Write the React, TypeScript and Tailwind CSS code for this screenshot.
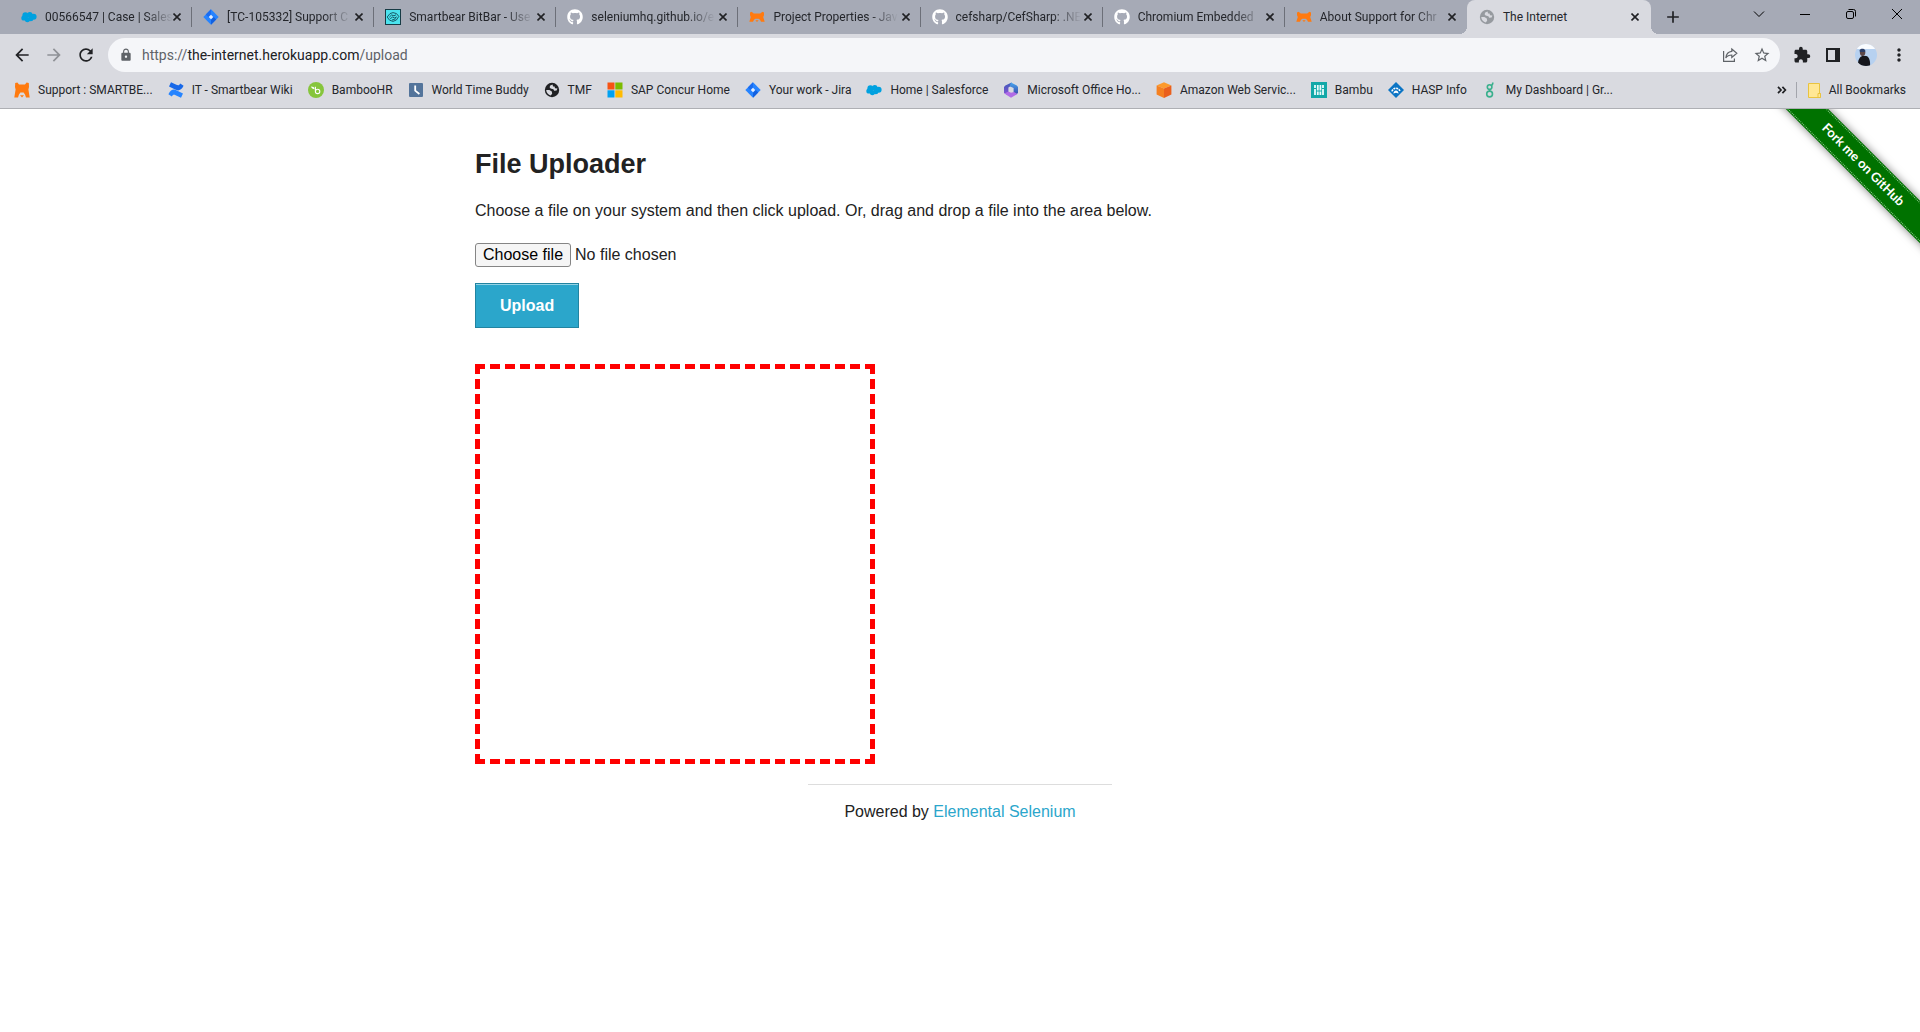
import React from "react";
import { FaGithub } from "react-icons/fa";
import {
  MdAdd,
  MdArrowBack,
  MdArrowForward,
  MdExtension,
  MdLock,
  MdMoreVert,
  MdRefresh,
  MdStarBorder,
} from "react-icons/md";

const Salesforce = () => (
  <svg viewBox="0 0 16 16" className="size-4 shrink-0">
    <g fill="#00a1e0">
      <circle cx="4.4" cy="6.2" r="3" />
      <circle cx="8.8" cy="5.8" r="2.7" />
      <circle cx="12.6" cy="7.7" r="3" />
      <circle cx="2.9" cy="9" r="2.6" />
      <circle cx="6.4" cy="10.6" r="2.6" />
      <circle cx="9.8" cy="9.8" r="2.5" />
    </g>
  </svg>
);

const Jira = () => (
  <svg viewBox="0 0 16 16" className="size-4 shrink-0">
    <path d="M8 0.3 15.7 8 8 15.7 0.3 8Z" fill="#2684ff" />
    <path d="M8 0.3V5.2L5.2 8 2.8 5.5Z" fill="#1a6cf0" />
    <path d="M8 15.7V10.8L10.8 8 13.2 10.5Z" fill="#1260e0" />
    <path d="M8 5.8 10.2 8 8 10.2 5.8 8Z" fill="#e6efff" />
  </svg>
);

const BitBar = () => (
  <svg viewBox="0 0 16 16" className="size-4 shrink-0">
    <rect x="0.5" y="0.5" width="15" height="15" fill="#4be3ee" stroke="#173b45" />
    <g fill="none" stroke="#124c59" strokeWidth="0.9">
      <path d="M2.2 8 5 4.6 8 3.6 11.5 4.6 13.8 7.4 11.4 11 8 12.4 4.6 11.2Z" />
      <path d="M4.3 8.2 6.5 6 9 6.8 11 5.8M5.2 9.8 7.5 8 9.6 9 11.8 7.8M7 11 9.2 10.4 10.8 9.6" />
    </g>
  </svg>
);

const Bear = () => (
  <svg viewBox="0 0 16 16" className="size-4 shrink-0">
    <path
      d="M1 3.4 2.6 2.8 4.8 4.4H11.2L13.4 2.8 15 3.4 15 6.2 14.2 8 15.7 12.8H12L11 10.8 9.6 9.8H6.4L5 10.8 4 12.8H0.3L1.8 8 1 6.2Z"
      fill="#ff7a0f"
    />
    <path d="M6.4 11.2H9.6L8 13Z" fill="#ff7a0f" />
  </svg>
);

const BearTall = () => (
  <svg viewBox="0 0 16 16" className="size-4 shrink-0">
    <path
      d="M1.2 1 3.4 0.4 5 2.6H11L12.6 0.4 14.8 1 15 5 14.4 7.6 15.7 15.6H12L11 12.4 9.6 10.4H6.4L5 12.4 4 15.6H0.3L1.6 7.6 1 5Z"
      fill="#ff7a0f"
    />
    <path d="M6 13.2H10L8 15.4Z" fill="#ff7a0f" />
  </svg>
);

const Confluence = () => (
  <svg viewBox="0 0 16 16" className="size-4 shrink-0">
    <path d="M0.4 12.2C3 7 6 7 8.8 8.4L15 11.4 13 15.8 7.6 13.2C5.6 12.2 4.8 12.8 3.8 14.6Z" fill="#2684ff" />
    <path d="M15.6 3.8C13 9 10 9 7.2 7.6L1 4.6 3 0.2 8.4 2.8C10.4 3.8 11.2 3.2 12.2 1.4Z" fill="#1868e8" />
  </svg>
);

const Bamboo = () => (
  <svg viewBox="0 0 16 16" className="size-4 shrink-0">
    <circle cx="8" cy="8" r="8" fill="#86c53c" />
    <path d="M3 4.6C5 4.6 6.4 5.2 6.6 7.2 4.8 7.2 3.6 6.4 3 4.6Z" fill="#fff" />
    <path d="M7.4 4.8V9.4A2.2 2.2 0 1 0 9.6 7.2C8.6 7.2 7.8 8 7.4 9" fill="none" stroke="#fff" strokeWidth="1.1" />
  </svg>
);

const Clock = () => (
  <svg viewBox="0 0 16 16" className="size-4 shrink-0">
    <rect x="1" y="1" width="14" height="14" rx="1" fill="#53749b" />
    <path d="M7.2 3.4V8.6L11.4 12" fill="none" stroke="#fff" strokeWidth="1.8" />
  </svg>
);

const Globe = () => (
  <svg viewBox="0 0 16 16" className="size-4 shrink-0">
    <circle cx="8" cy="8" r="7.2" fill="currentColor" />
    <path
      d="M8.6 2.4 6.2 3.4 5.6 5.2 6.6 6.6 9.4 7.2 10.2 8.8 12.6 8.6 13.4 6.4 11 6.2 10.6 4.4 9 4.6Z"
      fill="#d9dae0"
    />
    <path d="M2.2 8H5.4L7.8 9.4 8.2 11.4 6.8 13.6C4.2 13 2.4 10.8 2.2 8Z" fill="#d9dae0" />
  </svg>
);

const Microsoft = () => (
  <svg viewBox="0 0 16 16" className="size-4 shrink-0">
    <path d="M0.5 0.5H7.5V7.5H0.5Z" fill="#f65314" />
    <path d="M8.3 0.5H15.5V7.5H8.3Z" fill="#7cbb00" />
    <path d="M0.5 8.3H7.5V15.5H0.5Z" fill="#00a1f1" />
    <path d="M8.3 8.3H15.5V15.5H8.3Z" fill="#ffbb00" />
  </svg>
);

const Office = () => (
  <svg viewBox="0 0 16 16" className="size-4 shrink-0">
    <defs>
      <linearGradient id="officeLeft" x1="0" y1="0" x2="0" y2="1">
        <stop offset="0" stopColor="#3c5bb8" />
        <stop offset="1" stopColor="#8b52d6" />
      </linearGradient>
      <linearGradient id="officeRight" x1="0" y1="0" x2="0" y2="1">
        <stop offset="0" stopColor="#49a9f0" />
        <stop offset="1" stopColor="#3a46a8" />
      </linearGradient>
    </defs>
    <path d="M8.6 0.4 2.4 3.6 1 5V11L5.4 13.4V5.4L8.6 3.6Z" fill="url(#officeLeft)" />
    <path d="M8 0.4 13.8 3.4 15 5V11L12.4 12.8 10.6 10.4V6L6.6 4.2Z" fill="url(#officeRight)" />
    <path d="M1.4 11.4 5.4 9.6 8 10.8 11 10 14.4 12 8 15.7Z" fill="#b06be6" />
  </svg>
);

const Aws = () => (
  <svg viewBox="0 0 16 16" className="size-4 shrink-0">
    <path d="M8 0.2 15.4 3.4 8 6.4 0.6 3.4Z" fill="#fd9a2b" />
    <path d="M0.6 3.4 8 6.4V15.9L0.6 12.4Z" fill="#f58021" />
    <path d="M15.4 3.4 8 6.4V15.9L15.4 12.4Z" fill="#ea5f1d" />
  </svg>
);

const Bambu = () => (
  <svg viewBox="0 0 16 16" className="size-4 shrink-0">
    <path d="M0 0H16V16H0Z" fill="#13a8a8" />
    <path
      d="M4 3V6M4 7V13M6.8 3V8.4M6.8 9.4V13M9.4 3V8.4M9.4 9.4V13M12 3V6M12 7V13"
      stroke="#e9fbfb"
      strokeWidth="1.8"
    />
  </svg>
);

const Hasp = () => (
  <svg viewBox="0 0 16 16" className="size-4 shrink-0">
    <path d="M8 0 16 8 8 16 0 8Z" fill="#0b74c4" />
    <path d="M4 9.4A4.1 4.1 0 0 1 12 9.4" fill="none" stroke="#fff" strokeWidth="1.6" strokeDasharray="2 0.8" />
    <path d="M5.4 11.4C5.6 9.4 6.8 8.4 8 8.4S10.4 9.4 10.6 11.4L8 10.8Z" fill="#fff" />
  </svg>
);

const Greenhouse = () => (
  <svg viewBox="0 0 16 16" className="size-4 shrink-0">
    <g fill="none" stroke="#3ab08d" strokeWidth="1.6">
      <circle cx="7.6" cy="5" r="2.3" />
      <circle cx="7.6" cy="12" r="2.9" />
      <path d="M9.2 3.4C10.4 3.2 10.8 2.4 10.8 0.6M7.6 7.4V9" />
    </g>
  </svg>
);

const Github = () => <FaGithub className="size-4 shrink-0 text-white" />;
const DarkGlobe = () => (
  <span className="text-[#202124]">
    <Globe />
  </span>
);
const GreyGlobe = () => (
  <span className="text-[#969a9f]">
    <Globe />
  </span>
);

type Entry = { title: string; icon: React.FC };

const tabs: Entry[] = [
  { title: "00566547 | Case | Sales", icon: Salesforce },
  { title: "[TC-105332] Support C", icon: Jira },
  { title: "Smartbear BitBar - Use", icon: BitBar },
  { title: "seleniumhq.github.io/e", icon: Github },
  { title: "Project Properties - Jav", icon: Bear },
  { title: "cefsharp/CefSharp: .NE", icon: Github },
  { title: "Chromium Embedded", icon: Github },
  { title: "About Support for Chr", icon: Bear },
  { title: "The Internet", icon: GreyGlobe },
];

const bookmarks: Entry[] = [
  { title: "Support : SMARTBE...", icon: BearTall },
  { title: "IT - Smartbear Wiki", icon: Confluence },
  { title: "BambooHR", icon: Bamboo },
  { title: "World Time Buddy", icon: Clock },
  { title: "TMF", icon: DarkGlobe },
  { title: "SAP Concur Home", icon: Microsoft },
  { title: "Your work - Jira", icon: Jira },
  { title: "Home | Salesforce", icon: Salesforce },
  { title: "Microsoft Office Ho...", icon: Office },
  { title: "Amazon Web Servic...", icon: Aws },
  { title: "Bambu", icon: Bambu },
  { title: "HASP Info", icon: Hasp },
  { title: "My Dashboard | Gr...", icon: Greenhouse },
];

function Tab({ tab, active, divided }: { tab: Entry; active: boolean; divided: boolean }) {
  const Icon = tab.icon;
  return (
    <div
      className={
        active
          ? "relative flex min-w-0 flex-1 items-center rounded-t-lg bg-[#d9dae0] pr-2 pl-3"
          : "relative flex min-w-0 flex-1 items-center pr-[7px] pl-[11px]"
      }
    >
      {active && (
        <>
          <span className="absolute bottom-0 -left-2 size-2 bg-[radial-gradient(circle_at_0_0,transparent_8px,#d9dae0_8px)]" />
          <span className="absolute -right-2 bottom-0 size-2 bg-[radial-gradient(circle_at_100%_0,transparent_8px,#d9dae0_8px)]" />
        </>
      )}
      <button role="tab" aria-selected={active} className="flex min-w-0 flex-1 items-center gap-2 text-left">
        <Icon />
        <span
          className={
            active
              ? "flex-1 whitespace-nowrap"
              : "flex-1 [mask-image:linear-gradient(to_right,black_calc(100%-28px),transparent)] whitespace-nowrap"
          }
        >
          {tab.title}
        </span>
      </button>
      <button aria-label={`Close ${tab.title}`} className="grid size-4 shrink-0 place-items-center">
        <svg viewBox="0 0 8 8" className="size-2" stroke="#202124" strokeWidth="1.6">
          <path d="M0.5 0.5 7.5 7.5M7.5 0.5 0.5 7.5" />
        </svg>
      </button>
      {divided && <span className="absolute top-[7px] right-0 h-5 w-px bg-[#6c6f78]" />}
    </div>
  );
}

function TabStrip() {
  return (
    <div className="flex h-[34px] bg-[#a6aab6] pl-[10px] text-xs text-[#24262b]">
      <div role="tablist" className="flex max-w-[1641px] flex-1">
        {tabs.map((tab, i) => (
          <Tab key={tab.title} tab={tab} active={i === tabs.length - 1} divided={i < tabs.length - 2} />
        ))}
      </div>
      <button aria-label="New tab" className="ml-3 grid w-5 place-items-center">
        <MdAdd className="size-5 text-[#202124]" />
      </button>
      <div className="ml-auto flex h-7 items-center text-black">
        <button aria-label="Search tabs" className="grid w-[46px] place-items-center">
          <svg viewBox="0 0 12 12" className="size-3" fill="none" stroke="currentColor">
            <path d="M1 3.5 6 8.5 11 3.5" />
          </svg>
        </button>
        <button aria-label="Minimize" className="grid w-[46px] place-items-center">
          <svg viewBox="0 0 12 12" className="size-3" stroke="currentColor">
            <path d="M1 6.5H11" />
          </svg>
        </button>
        <button aria-label="Restore" className="grid w-[46px] place-items-center">
          <svg viewBox="0 0 12 12" className="size-3" fill="none" stroke="currentColor">
            <rect x="1.5" y="3.5" width="7" height="7" rx="1.5" />
            <path d="M3.5 1.5H8.5A2 2 0 0 1 10.5 3.5V8.5" />
          </svg>
        </button>
        <button aria-label="Close" className="grid w-[46px] place-items-center">
          <svg viewBox="0 0 12 12" className="size-3" stroke="currentColor">
            <path d="M1 1 11 11M11 1 1 11" />
          </svg>
        </button>
      </div>
    </div>
  );
}

function Toolbar() {
  return (
    <div className="flex items-center py-1 pr-[11px] pl-3 text-[#202124]">
      <div className="flex gap-3">
        <button aria-label="Back">
          <MdArrowBack className="size-5" />
        </button>
        <button aria-label="Forward" className="text-[#8f9196]">
          <MdArrowForward className="size-5" />
        </button>
        <button aria-label="Reload">
          <MdRefresh className="size-5" />
        </button>
      </div>
      <div className="ml-3 flex h-[34px] flex-1 items-center rounded-full bg-[#f5f6f9] pr-[9px] pl-[11px] text-[#5f6368]">
        <MdLock className="size-[14px]" />
        <div role="textbox" aria-label="Address" className="ml-[9px] flex-1 text-sm">
          https://<span className="text-[#202124]">the-internet.herokuapp.com</span>/upload
        </div>
        <button aria-label="Share">
          <svg viewBox="0 0 16 16" className="size-4" fill="none" stroke="currentColor" strokeWidth="1.2">
            <path d="M1.6 4V14.4H12.4V11.6" />
            <path d="M9.8 2 14.8 6.2 9.8 10.4V8C7 8 5.2 8.8 3.8 11 4.2 7.4 6.2 4.8 9.8 4.4Z" />
          </svg>
        </button>
        <button aria-label="Bookmark this page" className="ml-[15px]">
          <MdStarBorder className="size-[18px]" />
        </button>
      </div>
      <div className="ml-[13px] flex items-center gap-3">
        <button aria-label="Extensions">
          <MdExtension className="size-[18px]" />
        </button>
        <button aria-label="Side panel" className="grid size-5 place-items-center">
          <svg viewBox="0 0 14 14" className="size-[14px]">
            <path d="M0 0H14V14H0ZM2 2V12H9V2Z" fill="currentColor" fillRule="evenodd" />
          </svg>
        </button>
        <button aria-label="Profile">
          <svg viewBox="0 0 22 22" className="size-[22px] rounded-full">
            <path d="M0 0H22V22H0Z" fill="#b7d1f0" />
            <path d="M0 0H22V5H0Z" fill="#fafcff" />
            <path d="M3 22C2.6 16 4.6 12.6 8 11.8L11.4 12C14.6 13 15.4 18 15 22Z" fill="#15161c" />
            <ellipse cx="7.6" cy="8.6" rx="2.7" ry="3.4" fill="#5c4748" />
            <path d="M4.6 6.6C5 4.4 9.4 4 10.2 6.6V8H4.8Z" fill="#2c3e66" />
          </svg>
        </button>
        <button aria-label="Menu" className="grid w-5 place-items-center">
          <MdMoreVert className="size-5" />
        </button>
      </div>
    </div>
  );
}

function BookmarksBar() {
  return (
    <nav className="flex h-[33px] items-center border-b border-[#aeafb4] px-[14px] pb-1 text-xs text-[#24262b]">
      <div className="flex items-center gap-[15px]">
        {bookmarks.map(({ title, icon: Icon }) => (
          <a key={title} href="#" className="flex items-center gap-2 whitespace-nowrap">
            <Icon />
            {title}
          </a>
        ))}
      </div>
      <button aria-label="More bookmarks" className="ml-auto">
        <svg viewBox="0 0 10 8" className="h-2 w-[10px]" fill="none" stroke="#202124" strokeWidth="1.7">
          <path d="M1 0.8 4 4 1 7.2M5.4 0.8 8.4 4 5.4 7.2" />
        </svg>
      </button>
      <span className="mr-[11px] ml-[9px] h-4 w-px bg-[#a3a5ac]" />
      <a href="#" className="flex items-center gap-2 whitespace-nowrap">
        <svg viewBox="0 0 13 15" className="h-[15px] w-[13px]">
          <path d="M0.5 0.5H11.5V10.5H12.5V14.5H0.5Z" fill="#ffe795" stroke="#e9c33f" />
          <path d="M10 10.5H12.5V14.5H10Z" fill="#ffe795" stroke="#e9c33f" />
        </svg>
        All Bookmarks
      </a>
    </nav>
  );
}

function Ribbon() {
  return (
    <a href="#" className="absolute top-0 right-0 size-[149px] overflow-hidden">
      <span className="absolute top-[41px] -left-[18px] flex h-[30px] w-[220px] rotate-45 items-center justify-center bg-[#007200] font-['Lato',sans-serif] text-[13px] font-bold whitespace-nowrap text-white shadow-[0_0_8px_rgba(0,0,0,0.5)]">
        <span className="absolute inset-x-0 top-px border-t border-dotted border-[#8fc98f]" />
        Fork me on GitHub
        <span className="absolute inset-x-0 bottom-px border-b border-dotted border-[#8fc98f]" />
      </span>
    </a>
  );
}

function Page() {
  const [fileName, setFileName] = React.useState("No file chosen");
  return (
    <div className="relative font-['Liberation_Sans',Arial,sans-serif] text-base text-[#222222]">
      <Ribbon />
      <main className="mx-auto max-w-[1000px] px-[15px] pt-9">
        <h3 className="text-[27px] leading-[38px] font-bold">File Uploader</h3>
        <p className="mt-4 leading-6">
          Choose a file on your system and then click upload. Or, drag and drop a file into the area below.
        </p>
        <form onSubmit={(e) => e.preventDefault()}>
          <label className="mt-5 flex w-fit items-center gap-1">
            <input
              type="file"
              className="sr-only"
              onChange={(e) => setFileName(e.target.files?.[0]?.name ?? "No file chosen")}
            />
            <span className="rounded-[3px] border border-[#858585] bg-[#f5f5f5] px-[7px] leading-[22px] text-black">
              Choose file
            </span>
            <span>{fileName}</span>
          </label>
          <button
            type="submit"
            className="mt-4 block h-[45px] border border-[#2284a1] bg-[#2ba6cb] px-6 font-bold text-white shadow-[inset_0_1px_0_rgba(255,255,255,0.5)]"
          >
            Upload
          </button>
        </form>
        <div className="mt-9 aspect-square w-full max-w-[400px] border-[5px] border-dashed border-[#ff0000]" />
      </main>
      <footer className="mx-auto mt-5 w-full max-w-[304px] border-t border-[#dddddd] pt-[15px] text-center leading-6">
        Powered by{" "}
        <a href="#" className="text-[#2ba6cb]">
          Elemental Selenium
        </a>
      </footer>
    </div>
  );
}

export default function App() {
  return (
    <div className="min-h-screen bg-white">
      <header className="bg-[#d9dae0] font-['Roboto','Noto_Sans',sans-serif]">
        <TabStrip />
        <Toolbar />
        <BookmarksBar />
      </header>
      <Page />
    </div>
  );
}
